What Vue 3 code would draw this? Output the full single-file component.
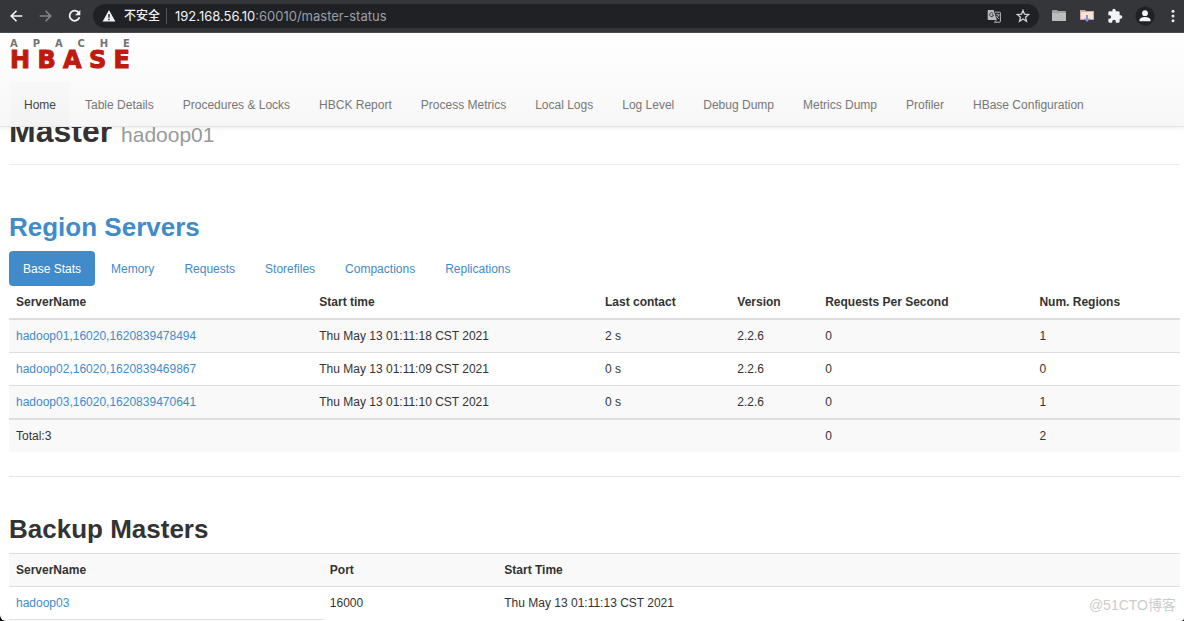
<script setup>
const navItems = [
  'Home', 'Table Details', 'Procedures & Locks', 'HBCK Report', 'Process Metrics', 'Local Logs',
  'Log Level', 'Debug Dump', 'Metrics Dump', 'Profiler', 'HBase Configuration',
]
const tabs = ['Base Stats', 'Memory', 'Requests', 'Storefiles', 'Compactions', 'Replications']
const servers = [
  { name: 'hadoop01,16020,1620839478494', start: 'Thu May 13 01:11:18 CST 2021', contact: '2 s', version: '2.2.6', rps: 0, regions: 1 },
  { name: 'hadoop02,16020,1620839469867', start: 'Thu May 13 01:11:09 CST 2021', contact: '0 s', version: '2.2.6', rps: 0, regions: 0 },
  { name: 'hadoop03,16020,1620839470641', start: 'Thu May 13 01:11:10 CST 2021', contact: '0 s', version: '2.2.6', rps: 0, regions: 1 },
]
</script>

<template>
  <div class="window">
    <div class="toolbar">
      <div class="history">
        <button type="button" aria-label="Back">
          <svg width="16" height="16" viewBox="0 0 16 16" fill="none" stroke="#f1f3f4" stroke-width="1.8"><path d="M14.2 8H2.6M8 2.4 2.4 8 8 13.6" /></svg>
        </button>
        <button type="button" aria-label="Forward">
          <svg width="16" height="16" viewBox="0 0 16 16" fill="none" stroke="#85868a" stroke-width="1.7"><path d="M1.8 8h11.6M8 2.4 13.6 8 8 13.6" /></svg>
        </button>
        <button type="button" aria-label="Reload">
          <svg width="16" height="16" viewBox="0 0 16 16"><path d="M12.6 4.6A5.4 5.4 0 1 0 13.3 9.4" fill="none" stroke="#f1f3f4" stroke-width="1.9" /><path d="M14.2 1.6v5.6H8.6z" fill="#f1f3f4" /></svg>
        </button>
      </div>
      <div class="address">
        <button type="button" class="security">
          <svg width="14" height="14" viewBox="0 0 14 14"><path d="M7 1 13.4 12.6H.6z" fill="#f1f3f4" /><path d="M7 5v3.8M7 9.8v1.5" stroke="#202124" stroke-width="1.4" /></svg>
          <span>不安全</span>
        </button>
        <span class="divider"></span>
        <div class="url"><span class="host">192.168.56.10</span>:60010/master-status</div>
        <button type="button" aria-label="Translate">
          <svg width="14" height="14" viewBox="0 0 14 14">
            <path d="M1.5 1h5.2L9.6 11H1.5A1 1 0 0 1 .7 10V2a1 1 0 0 1 .8-1z" fill="#b9babd" />
            <path d="M8 3.2h4.6a.8.8 0 0 1 .8.8v8.4a.8.8 0 0 1-.8.8H7.4l2.2-2.2" fill="none" stroke="#b9babd" />
            <path d="M6.2 4.4A2 2 0 1 0 6.6 6H4.9" fill="none" stroke="#3c3d41" />
            <path d="M8.8 5.8h3.8M10.7 4.8v1M11.8 5.8c-.4 1.8-1.4 2.8-2.4 3.6M9.4 7c.6 1.2 1.6 2 2.6 3" fill="none" stroke="#b9babd" stroke-width=".8" />
          </svg>
        </button>
        <button type="button" aria-label="Bookmark">
          <svg width="14" height="14" viewBox="0 0 14 14"><path d="M7 1.4 8.5 5.2 12.7 5.5 9.5 8.2 10.5 12.3 7 10 3.5 12.3 4.5 8.2 1.3 5.5 5.5 5.2z" fill="none" stroke="#d0d1d4" stroke-width="1.3" /></svg>
        </button>
      </div>
      <div class="extensions">
        <button type="button" aria-label="Folder">
          <svg width="16" height="14" viewBox="0 0 16 14"><path d="M1 3V2q0-1 1-1h4l1 1h7q1 0 1 1v8q0 1-1 1H2q-1 0-1-1z" fill="#a2a3a3" /><path d="M1 4h14v7q0 1-1 1H2q-1 0-1-1z" fill="#bcbdbc" /></svg>
        </button>
        <button type="button" aria-label="Downloads folder">
          <svg width="16" height="14" viewBox="0 0 16 14"><path d="M1 1h5l1 1h8v9H1z" fill="#d8a9a1" /><path d="M2 3h12v7H2z" fill="#f5e6d2" /><path d="M1 10.500h14" stroke="#c68fc0" /><path d="M7 6h2v3.500h2.200L8 13 4.800 9.500H7z" fill="#8c8ed6" /></svg>
        </button>
        <button type="button" aria-label="Extensions">
          <svg width="16" height="16" viewBox="0 0 24 24"><path d="M20.5 11H19V7a2 2 0 0 0-2-2h-4V3.500a2.500 2.500 0 0 0-5 0V5H4a2 2 0 0 0-2 2v3.800h1.500a2.700 2.700 0 0 1 0 5.400H2V20a2 2 0 0 0 2 2h3.800v-1.500a2.700 2.700 0 0 1 5.400 0V22H17a2 2 0 0 0 2-2v-4h1.500a2.500 2.500 0 0 0 0-5z" fill="#f1f3f4" /></svg>
        </button>
        <button type="button" aria-label="Profile">
          <svg width="20" height="20" viewBox="0 0 20 20"><circle cx="10" cy="10" r="9.600" fill="#202124" /><circle cx="10" cy="7.200" r="2.900" fill="#f1f3f4" /><path d="M4.500 15.200v-1.200c0-2 3-3 5.500-3s5.500 1 5.500 3v1.200z" fill="#f1f3f4" /></svg>
        </button>
        <button type="button" aria-label="Menu">
          <svg width="4" height="14" viewBox="0 0 4 14" fill="#e8eaed"><circle cx="2" cy="2.300" r="1.500" /><circle cx="2" cy="7" r="1.500" /><circle cx="2" cy="11.700" r="1.500" /></svg>
        </button>
      </div>
    </div>

    <header class="navbar">
      <a href="#" class="logo" aria-label="Apache HBase">
        <span class="apache"><span v-for="(c, i) in 'APACHE'" :key="i">{{ c }}</span></span>
        <span class="hbase"><span v-for="(c, i) in 'HBASE'" :key="i">{{ c }}</span></span>
      </a>
      <nav class="nav">
        <a v-for="(item, i) in navItems" :key="item" href="#" :class="{ active: i === 0 }">{{ item }}</a>
      </nav>
    </header>

    <main class="content">
      <div class="page-header">
        <h1>Master <small>hadoop01</small></h1>
      </div>

      <section class="regions">
        <h2><a href="#">Region Servers</a></h2>
        <nav class="tabs">
          <a v-for="(tab, i) in tabs" :key="tab" href="#" :class="{ active: i === 0 }">{{ tab }}</a>
        </nav>
        <table class="servers">
          <thead>
            <tr>
              <th class="c-name">ServerName</th>
              <th class="c-start">Start time</th>
              <th class="c-contact">Last contact</th>
              <th class="c-version">Version</th>
              <th class="c-rps">Requests Per Second</th>
              <th>Num. Regions</th>
            </tr>
          </thead>
          <tbody>
            <tr v-for="s in servers" :key="s.name">
              <td><a href="#">{{ s.name }}</a></td>
              <td>{{ s.start }}</td>
              <td>{{ s.contact }}</td>
              <td>{{ s.version }}</td>
              <td>{{ s.rps }}</td>
              <td>{{ s.regions }}</td>
            </tr>
          </tbody>
          <tfoot>
            <tr>
              <td>Total:3</td>
              <td></td>
              <td></td>
              <td></td>
              <td>0</td>
              <td>2</td>
            </tr>
          </tfoot>
        </table>
      </section>

      <hr />

      <section class="backups">
        <h2>Backup Masters</h2>
        <table class="masters">
          <tbody>
            <tr>
              <th class="m-name">ServerName</th>
              <th class="m-port">Port</th>
              <th>Start Time</th>
            </tr>
            <tr>
              <td><a href="#">hadoop03</a></td>
              <td>16000</td>
              <td>Thu May 13 01:11:13 CST 2021</td>
            </tr>
            <tr>
              <td></td>
            </tr>
          </tbody>
        </table>
      </section>
    </main>

    <div class="watermark">@51CTO博客</div>
  </div>
</template>

<style>
html {
  background: #000;
}
</style>

<style scoped>
.window {
  position: relative;
  height: 100vh;
  overflow: hidden;
  border-radius: 0 0 3px 6px;
  background: #fff;
  color: #333;
  font: 12px/18px "Liberation Sans", "Noto Sans CJK SC", sans-serif;
}

a {
  color: #428bca;
  text-decoration: none;
}

button {
  display: flex;
  align-items: center;
  justify-content: center;
  padding: 0;
  border: 0;
  background: none;
  color: inherit;
  font: inherit;
}

.toolbar {
  display: flex;
  align-items: center;
  height: 32px;
  padding: 0 9px;
  border-bottom: 1px solid #4b4c4f;
  background: #35363a;
}

.history {
  display: flex;
  gap: 14px;
  width: 84px;
}

.history button {
  width: 15px;
}

.address {
  display: flex;
  flex: 1;
  align-items: center;
  gap: 15px;
  height: 24px;
  padding: 0 9px;
  border-radius: 12px;
  background: #202124;
  color: #9aa0a6;
  font: 13px/24px Inter, "Noto Sans CJK SC", sans-serif;
}

.security {
  gap: 8px;
  color: #f1f3f4;
  font-size: 12px;
  font-weight: 500;
}

.divider {
  width: 1px;
  height: 16px;
  margin: 0 -7px 0 -9px;
  background: #55565a;
}

.url {
  flex: 1;
}

.host {
  color: #f1f3f4;
}

.extensions {
  display: flex;
  align-items: center;
  gap: 12px;
  margin-left: 12px;
}

.extensions button:last-child {
  margin-left: 4px;
}

.navbar {
  position: relative;
  z-index: 1;
  box-sizing: border-box;
  height: 94px;
  padding: 6px 10px 0;
  border-bottom: 1px solid #e4e4e4;
  background: linear-gradient(#fff, #f7f7f7);
  box-shadow: 0 1px 4px rgba(0, 0, 0, 0.08);
}

.logo {
  display: block;
  width: 120px;
  height: 43px;
  font-family: "DejaVu Sans", sans-serif;
  font-weight: bold;
}

.apache,
.hbase {
  display: flex;
  justify-content: space-between;
}

.apache {
  color: #737373;
  font-size: 10px;
  line-height: 10px;
}

.hbase {
  color: #be1a10;
  font-size: 24px;
  line-height: 23px;
  -webkit-text-stroke: 1px #be1a10;
}

.nav {
  display: flex;
  gap: 1px;
}

.nav a {
  padding: 14px 14px 12px;
  color: #777;
  white-space: nowrap;
}

.nav .active {
  background: linear-gradient(#f8f8f8, #f3f3f3);
  color: #444;
}

.content {
  padding: 0 4px 0 9px;
}

.page-header {
  margin-top: -14px;
  padding-bottom: 15px;
  border-bottom: 1px solid #eee;
}

h1,
h2 {
  margin: 0;
  font-weight: bold;
}

h1 {
  font-size: 32px;
  line-height: 36px;
}

h1 small {
  color: #999;
  font-size: 21px;
  font-weight: normal;
  line-height: 21px;
}

h2 {
  margin-bottom: 9px;
  font-size: 26px;
  line-height: 30px;
}

.regions {
  margin-top: 47px;
}

.tabs {
  display: flex;
  gap: 2px;
}

.tabs a {
  padding: 9px 14px 8px;
  border-radius: 4px;
}

.tabs .active {
  background: #428bca;
  color: #fff;
}

table {
  width: 100%;
  table-layout: fixed;
  border-spacing: 0;
}

th,
td {
  height: 18px;
  padding: 7px;
  text-align: left;
}

tr > * {
  border-top: 1px solid #ddd;
}

.servers th {
  border-top: 0;
  border-bottom: 2px solid #ddd;
}

.servers tbody tr:first-child td {
  border-top: 0;
}

.servers tfoot td {
  border-top-width: 2px;
}

.servers tbody tr:nth-child(odd) td,
.servers tfoot td,
.masters th {
  background: #f9f9f9;
}

.c-name {
  width: 25.9%;
}

.c-start {
  width: 24.4%;
}

.c-contact {
  width: 11.3%;
}

.c-version {
  width: 7.5%;
}

.c-rps {
  width: 18.3%;
}

th {
  box-sizing: border-box;
}

.servers th {
  height: 34px;
}

.masters th {
  height: 33px;
}

.m-name {
  width: 26.8%;
}

.m-port {
  width: 14.9%;
}

hr {
  margin: 24px 0 37px;
  border: 0;
  border-top: 1px solid #e4e4e4;
}

.watermark {
  position: absolute;
  right: 8px;
  bottom: 7px;
  color: #ccc;
  font-size: 14px;
}
</style>
